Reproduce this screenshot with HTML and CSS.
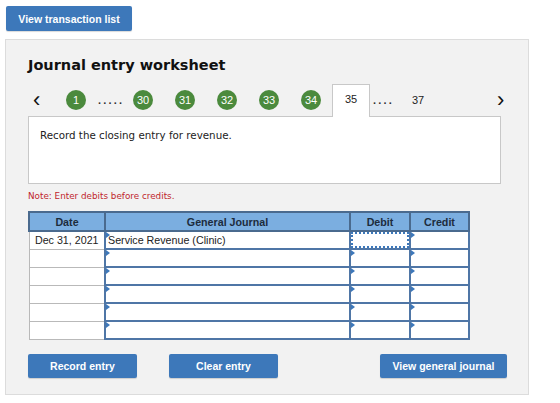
FILE: index.html
```html
<!DOCTYPE html>
<html>
    <head>
        <meta charset="utf-8">
        <title>Journal entry worksheet</title>
        <link rel="stylesheet" href="styles.css">
    </head>
    <body>
        <button class="btn topBtn">View transaction list</button>

        <div class="panel">
            <h2 class="title">Journal entry worksheet</h2>

            <div class="pager">
                <span class="arrow prev">&lsaquo;</span>
                <span class="dot first">1</span>
                <span class="dots dotsA">.....</span>
                <span class="dot">30</span>
                <span class="dot">31</span>
                <span class="dot">32</span>
                <span class="dot">33</span>
                <span class="dot">34</span>
                <span class="tab">35</span>
                <span class="dots dotsB">....</span>
                <span class="num">37</span>
                <span class="arrow next">&rsaquo;</span>
            </div>

            <div class="question">Record the closing entry for revenue.</div>

            <p class="note">Note: Enter debits before credits.</p>

            <table class="journal">
                <tr>
                    <th class="cDate">Date</th>
                    <th class="cAcc">General Journal</th>
                    <th class="cDr">Debit</th>
                    <th class="cCr">Credit</th>
                </tr>
                <tr>
                    <td class="date">Dec 31, 2021</td>
                    <td class="inp acc">Service Revenue (Clinic)</td>
                    <td class="inp focus"></td>
                    <td class="inp"></td>
                </tr>
                <tr><td class="date"></td><td class="inp"></td><td class="inp"></td><td class="inp"></td></tr>
                <tr><td class="date"></td><td class="inp"></td><td class="inp"></td><td class="inp"></td></tr>
                <tr><td class="date"></td><td class="inp"></td><td class="inp"></td><td class="inp"></td></tr>
                <tr><td class="date"></td><td class="inp"></td><td class="inp"></td><td class="inp"></td></tr>
                <tr><td class="date"></td><td class="inp"></td><td class="inp"></td><td class="inp"></td></tr>
            </table>

            <div class="actions">
                <button class="btn recordBtn">Record entry</button>
                <button class="btn clearBtn">Clear entry</button>
                <button class="btn viewBtn">View general journal</button>
            </div>
        </div>
    </body>
</html>
```

FILE: styles.css
```css
body,html{
    margin:0px;
    padding:0px;
    background:white;
    font-family:"Liberation Sans",Arial,sans-serif;
}
.btn{
    display:block;
    background:#3d78ba;
    color:white;
    border:none;
    border-radius:2px;
    font-family:"Liberation Sans",Arial,sans-serif;
    font-weight:bold;
    font-size:10.5px;
    height:25px;
    padding:0px;
    box-shadow:0px 1px 1px rgba(0,0,0,0.15);
}
.topBtn{
    margin:6px 0px 0px 6px;
    width:126px;
}
.panel{
    margin:8px 0px 0px 5px;
    width:524px;
    height:356px;
    box-sizing:border-box;
    background:#f2f2f2;
    border:1px solid #dcdcdc;
    padding:15px 0px 0px 22px;
}
.title{
    margin:0px;
    font-family:"DejaVu Sans",Verdana,sans-serif;
    font-size:14.5px;
    line-height:20px;
    font-weight:bold;
    color:#111;
}
.pager{
    display:flex;
    align-items:center;
    height:32px;
    margin-top:9px;
    font-size:11px;
    color:#222;
}
.arrow{
    font-size:22px;
    line-height:28px;
    width:10px;
    color:#111;
}
.prev{
    margin-left:5px;
}
.dot{
    width:20px;
    height:20px;
    border-radius:50%;
    background:#4b8a3d;
    color:white;
    text-align:center;
    line-height:20px;
    margin-right:22px;
}
.dot.first{
    margin-left:23px;
    margin-right:12px;
}
.dots{
    letter-spacing:2.2px;
    font-weight:bold;
    color:#333;
}
.dotsA{
    width:35px;
}
.tab{
    align-self:flex-end;
    width:38px;
    height:33px;
    margin-left:-11px;
    margin-bottom:-1px;
    box-sizing:border-box;
    background:white;
    border:1px solid #c8c8c8;
    border-bottom:none;
    line-height:28px;
    text-align:center;
    position:relative;
}
.dotsB{
    margin-left:3px;
    width:39px;
}
.num{
    width:85px;
}
.question{
    width:473px;
    height:68px;
    box-sizing:border-box;
    background:white;
    border:1px solid #c8c8c8;
    padding:12px 11px;
    font-family:"DejaVu Sans",Verdana,sans-serif;
    font-size:10.3px;
    color:#222;
}
.note{
    margin:6px 0px 0px 0px;
    font-family:"DejaVu Sans",Verdana,sans-serif;
    font-size:8.8px;
    line-height:12px;
    color:#c0262d;
}
.journal{
    margin-top:9px;
    border-collapse:collapse;
    font-size:10.7px;
    table-layout:fixed;
}
.journal th{
    background:#7baee0;
    border:2px solid #4a6a8e;
    height:17px;
    padding:0px;
    font-weight:bold;
    color:#1d2c3d;
}
.cDate{ width:74px; }
.cAcc{ width:243px; }
.cDr{ width:58px; }
.cCr{ width:57px; }
.journal td{
    height:14px;
    padding:1px 2px;
    position:relative;
    background:white;
}
.journal td.date{
    border:1px solid #b9b9b9;
    text-align:center;
    color:#222;
}
.journal td.inp{
    border:2px solid #4f76a6;
}
.journal td.inp::before{
    content:"";
    position:absolute;
    left:0px;
    top:0px;
    border-top:3px solid transparent;
    border-bottom:3px solid transparent;
    border-left:4px solid #3d78ba;
}
.journal td.acc{
    color:#222;
    padding-left:2px;
}
.journal td.focus::before{
    display:none;
}
.journal td.focus{
    outline:2px dotted #3d78ba;
    outline-offset:-3px;
}
.actions{
    display:flex;
    margin-top:14px;
}
.recordBtn{
    width:109px;
    height:24px;
}
.clearBtn{
    width:109px;
    height:24px;
    margin-left:32px;
}
.viewBtn{
    width:127px;
    height:24px;
    margin-left:102px;
}
```
